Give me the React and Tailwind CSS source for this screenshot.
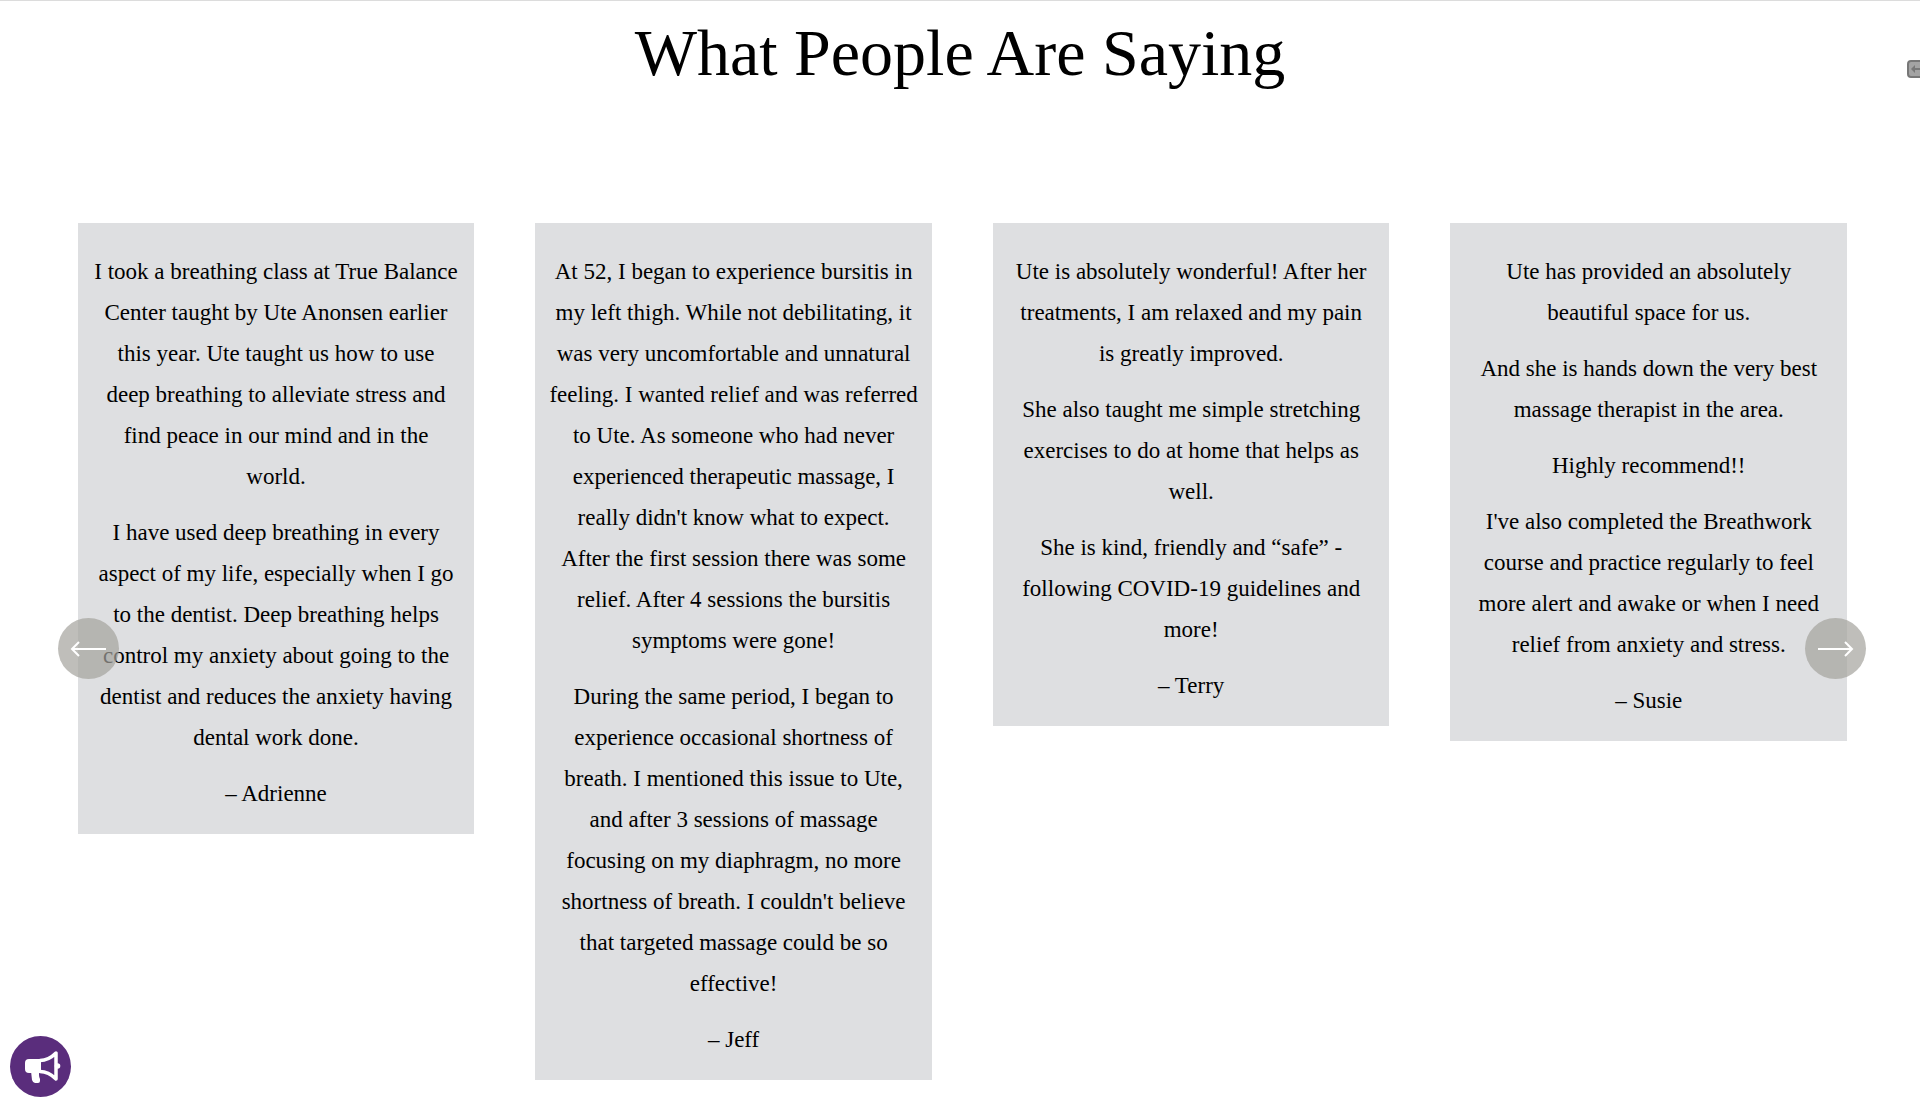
import React from 'react';

const testimonials = [
  {
    name: 'Adrienne',
    paragraphs: [
      'I took a breathing class at True Balance\nCenter taught by Ute Anonsen earlier\nthis year. Ute taught us how to use\ndeep breathing to alleviate stress and\nfind peace in our mind and in the\nworld.',
      'I have used deep breathing in every\naspect of my life, especially when I go\nto the dentist. Deep breathing helps\ncontrol my anxiety about going to the\ndentist and reduces the anxiety having\ndental work done.',
    ],
  },
  {
    name: 'Jeff',
    paragraphs: [
      "At 52, I began to experience bursitis in\nmy left thigh. While not debilitating, it\nwas very uncomfortable and unnatural\nfeeling. I wanted relief and was referred\nto Ute. As someone who had never\nexperienced therapeutic massage, I\nreally didn't know what to expect.\nAfter the first session there was some\nrelief. After 4 sessions the bursitis\nsymptoms were gone!",
      "During the same period, I began to\nexperience occasional shortness of\nbreath. I mentioned this issue to Ute,\nand after 3 sessions of massage\nfocusing on my diaphragm, no more\nshortness of breath. I couldn't believe\nthat targeted massage could be so\neffective!",
    ],
  },
  {
    name: 'Terry',
    paragraphs: [
      'Ute is absolutely wonderful! After her\ntreatments, I am relaxed and my pain\nis greatly improved.',
      'She also taught me simple stretching\nexercises to do at home that helps as\nwell.',
      'She is kind, friendly and “safe” -\nfollowing COVID-19 guidelines and\nmore!',
    ],
  },
  {
    name: 'Susie',
    paragraphs: [
      'Ute has provided an absolutely\nbeautiful space for us.',
      'And she is hands down the very best\nmassage therapist in the area.',
      'Highly recommend!!',
      "I've also completed the Breathwork\ncourse and practice regularly to feel\nmore alert and awake or when I need\nrelief from anxiety and stress.",
    ],
  },
];

const TestimonialCard = ({ name, paragraphs }) => (
  <article className="bg-[#dedfe1] px-2 pt-7 pb-5 text-center text-[23px] leading-[41px]">
    <div className="flex flex-col gap-[15px]">
      {paragraphs.map((text) => (
        <p key={text} className="whitespace-pre-line">{text}</p>
      ))}
      <p>– {name}</p>
    </div>
  </article>
);

const ArrowButton = ({ label, className, children }) => (
  <button
    type="button"
    aria-label={label}
    className={`absolute top-[395px] flex size-[61px] items-center justify-center rounded-full bg-[#a4a29c]/70 text-white ${className}`}
  >
    <svg width="37" height="16" viewBox="0 0 37 16" fill="none" stroke="currentColor" strokeWidth="2">
      {children}
    </svg>
  </button>
);

const Megaphone = () => (
  <svg className="ml-1" width="36" height="32" viewBox="0 0 36 32" fill="currentColor">
    <path d="M4 8h12v14H4q-4 0-4-4v-6q0-4 4-4z" />
    <path d="M6 20h8v4q0 2 1 4v2q0 2-2 2h-3q-2 0-3-3z" />
    <path
      d="M15 9.500C22 9.500 27 6 31 2v26C27 24 22 20.500 15 20.500"
      fill="none"
      stroke="currentColor"
      strokeWidth="3.500"
      strokeLinecap="round"
      strokeLinejoin="round"
    />
    <circle cx="32.500" cy="15" r="2.800" />
  </svg>
);

const App = () => {
  return (
    <main className="relative min-h-screen overflow-hidden border-t border-[#dcdcdc] bg-white pb-6 font-['Liberation_Serif',serif] text-black">
      <h2 className="pt-2.5 text-center text-[66px] leading-[84px]">What People Are Saying</h2>

      <section aria-label="Testimonials" className="relative mt-32 pr-[3.8%] pl-[4.05%]">
        <div className="grid grid-cols-4 items-start gap-[61px]">
          {testimonials.map((item) => (
            <TestimonialCard key={item.name} {...item} />
          ))}
        </div>
        <ArrowButton label="Previous" className="left-[58px]">
          <path d="M36 8H2M9 1L2 8l7 7" />
        </ArrowButton>
        <ArrowButton label="Next" className="right-[54px]">
          <path d="M1 8h34M28 1l7 7-7 7" />
        </ArrowButton>
      </section>

      {/* Slide-out tab, mostly off the right edge */}
      <button
        type="button"
        aria-label="Open panel"
        className="absolute top-[59px] -right-2 flex h-[18px] w-[21px] items-center justify-start rounded-[4px] border-2 border-[#777777] bg-[#a3a3a3] pl-0.5 text-[#777777]"
      >
        <svg width="9" height="8" viewBox="0 0 9 8" fill="currentColor">
          <path d="M0 4l4-4v3h5v2H4v3z" />
        </svg>
      </button>

      <button
        type="button"
        aria-label="Announcements"
        className="fixed bottom-[7px] left-2.5 flex size-[61px] items-center justify-center rounded-full bg-[#5a2d7c] text-white"
      >
        <Megaphone />
      </button>
    </main>
  );
};

export default App;
